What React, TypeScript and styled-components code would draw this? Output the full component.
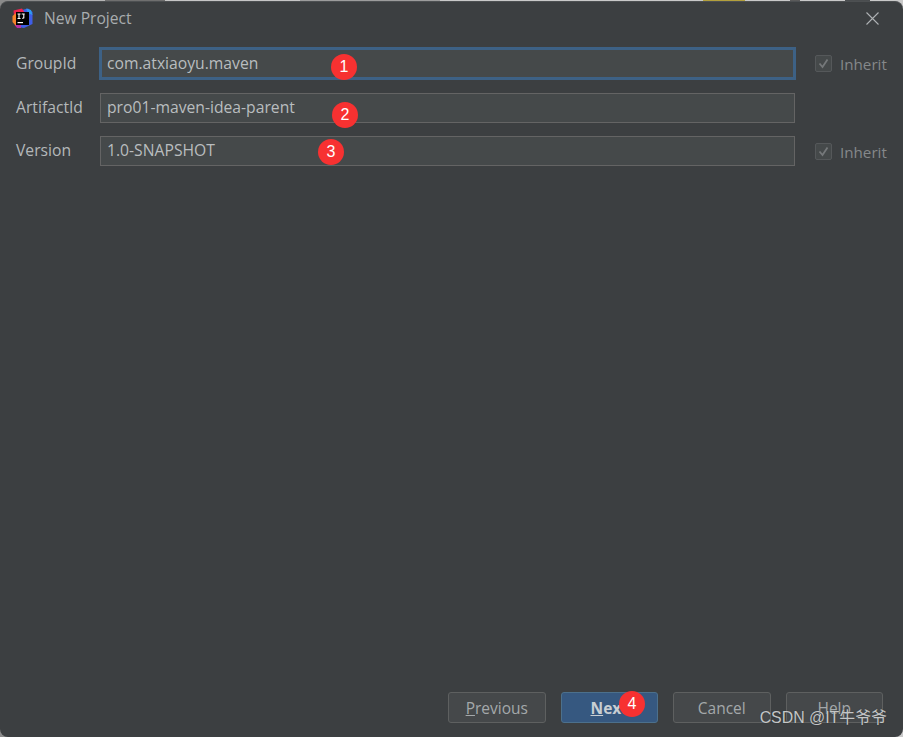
import React from 'react'
import styled, { createGlobalStyle } from 'styled-components'

const GlobalStyle = createGlobalStyle`
  html, body {
    margin: 0;
    padding: 0;
    background: #3c3f41;
  }
`

// what shows of the window behind the dialog, along the top edge
const Page = styled.div`
  width: 903px;
  height: 737px;
  padding-top: 1px;
  box-sizing: border-box;
  background: linear-gradient(
    to right,
    #8a8a8a 0 60px,
    #b5b5b5 60px 105px,
    #6f6f6f 105px 165px,
    #c6c6c6 165px 300px,
    #9c9c9c 300px 440px,
    #c9c9c9 440px 703px,
    #b3a03c 703px 745px,
    #c9c9c9 745px 790px,
    #5a5a5a 790px 800px,
    #c9c9c9 800px 845px,
    #4a4d4f 845px 870px,
    #c9c9c9 870px 903px
  );
`

const Dialog = styled.div`
  box-sizing: border-box;
  width: 903px;
  height: 736px;
  position: relative;
  display: flex;
  flex-direction: column;
  background: #3c3f41;
  border-top: 1px solid #4d5052;
  border-radius: 8px;
  font-family: 'Open Sans', 'Noto Sans', sans-serif;
  color: #b4b8ba;
  overflow: hidden;
`

const TitleBar = styled.div`
  height: 33px;
  display: flex;
  align-items: center;
  padding: 0 24px 0 12px;
  flex: none;
`

const Title = styled.span`
  margin-left: 11px;
  padding-bottom: 1px;
  font-size: 15.6px;
  flex: 1;
  color: #a9adaf;
`

const Form = styled.div`
  display: flex;
  flex-direction: column;
  gap: 13px;
  padding: 13px 0 0 16px;
  flex: 1;
`

const Row = styled.div<{ $pulled?: boolean }>`
  display: flex;
  align-items: center;
  height: 31px;
  margin-top: ${({ $pulled }) => ($pulled ? '-1px' : '0')};
`

const Label = styled.label`
  width: 84px;
  padding-bottom: 2px;
  font-size: 15.7px;
  color: #b4b8ba;
`

const Field = styled.div<{ $focused?: boolean }>`
  box-sizing: border-box;
  width: 695px;
  height: 30px;
  display: flex;
  align-items: center;
  padding: 0 0 2px 6px;
  font-size: 15.7px;
  color: #b9bdbf;
  background: #45494a;
  border: 1px solid #646464;
  ${({ $focused }) =>
    $focused &&
    `
    width: 697px;
    height: 33px;
    margin: 0 -1px;
    border: 3px solid #3d6185;
    padding-left: 5px;
  `}
`

const Inherit = styled.div<{ $low?: boolean }>`
  display: flex;
  align-items: center;
  gap: 8px;
  margin: ${({ $low }) => ($low ? '2px' : '0')} 0 0 20px;
  font-size: 15.2px;
  color: #85888a;
`

const CheckBox = styled.span`
  box-sizing: border-box;
  width: 17px;
  height: 17px;
  display: flex;
  align-items: center;
  justify-content: center;
  background: #45494a;
  border: 1px solid #55585a;
  border-radius: 2px;
`

const Footer = styled.div`
  display: flex;
  justify-content: flex-end;
  gap: 15px;
  padding: 0 20px 14px 0;
  flex: none;
`

const Button = styled.div<{ $primary?: boolean }>`
  box-sizing: border-box;
  width: 97.5px;
  height: 31px;
  padding-top: 1px;
  display: flex;
  align-items: center;
  justify-content: center;
  font-size: 15.5px;
  border-radius: 3px;
  color: ${({ $primary }) => ($primary ? '#c8ced3' : '#a4a8aa')};
  font-weight: ${({ $primary }) => ($primary ? 700 : 400)};
  background: ${({ $primary }) => ($primary ? '#365880' : '#45484a')};
  border: 1px solid ${({ $primary }) => ($primary ? '#4c708c' : '#5e6060')};
`

const Mnemonic = styled.span`
  text-decoration: underline;
`

const Badge = styled.span<{ $x: number; $y: number }>`
  position: absolute;
  left: ${({ $x }) => $x}px;
  top: ${({ $y }) => $y}px;
  width: 26px;
  height: 26px;
  border-radius: 50%;
  background: #f73131;
  color: #ffffff;
  display: flex;
  align-items: center;
  justify-content: center;
  font-family: 'Liberation Sans', sans-serif;
  font-size: 16px;
`

const Watermark = styled.span`
  position: absolute;
  right: 16px;
  bottom: 9px;
  font-family: 'Liberation Sans', 'Noto Sans CJK SC', sans-serif;
  font-size: 15.9px;
  color: #c4c6c7;
  text-shadow: 0 0 1px #2c2e30;
`

const CloseIcon = () => (
  <svg width="13" height="13" viewBox="0 0 13 13">
    <path d="M0.5 0.5 L12.5 12.5 M12.5 0.5 L0.5 12.5" stroke="#aeb1b3" strokeWidth="1.1" />
  </svg>
)

const CheckMark = () => (
  <svg width="13" height="13" viewBox="0 0 13 13" fill="none">
    <path d="M2.5 6.5 L5.5 10 L10.5 2.5" stroke="#75787a" strokeWidth="1.8" />
  </svg>
)

const Logo = () => (
  <svg width="21" height="21" viewBox="0 0 21 21">
    <path d="M10 2 L16 0.5 L20.5 4 L20.5 16 L12 20 L6 19 Z" fill="#3f5ee8" />
    <path d="M1.5 2.5 L10 0.5 L13 5 L8 20 L3 18 Z" fill="#ee2350" />
    <path d="M0.5 8 L4 5 L4 18 L0.5 14 Z" fill="#f6822a" />
    <path d="M3 17 L9 17 L9 20 L5 20 Z" fill="#b42fa8" />
    <path d="M14 0.5 L19 2 L20.5 7 L16 5 Z" fill="#2f9bf2" />
    <rect x="4" y="4" width="13" height="13" fill="#000000" />
    <path d="M5.5 6 H8.5 M7 6 V10.5 M5.5 10.5 H8.5 M9.7 6 H12.7 M11.8 6 V9.8 L10.3 10.5" stroke="#ffffff" strokeWidth="1.1" fill="none" />
    <rect x="5.5" y="14" width="5.5" height="1.2" fill="#ffffff" />
  </svg>
)

const App: React.FC = () => (
  <>
    <GlobalStyle />
    <Page>
      <Dialog>
        <TitleBar>
          <Logo />
          <Title>New Project</Title>
          <CloseIcon />
        </TitleBar>
        <Form>
          <Row>
            <Label>GroupId</Label>
            <Field $focused>com.atxiaoyu.maven</Field>
            <Inherit>
              <CheckBox>
                <CheckMark />
              </CheckBox>
              Inherit
            </Inherit>
          </Row>
          <Row>
            <Label>ArtifactId</Label>
            <Field>pro01-maven-idea-parent</Field>
          </Row>
          <Row $pulled>
            <Label>Version</Label>
            <Field>1.0-SNAPSHOT</Field>
            <Inherit $low>
              <CheckBox>
                <CheckMark />
              </CheckBox>
              Inherit
            </Inherit>
          </Row>
        </Form>
        <Footer>
          <Button>
            <span>
              <Mnemonic>P</Mnemonic>revious
            </span>
          </Button>
          <Button $primary>
            <span>
              <Mnemonic>N</Mnemonic>ext
            </span>
          </Button>
          <Button>Cancel</Button>
          <Button>Help</Button>
        </Footer>
        <Badge $x={331} $y={52}>1</Badge>
        <Badge $x={332} $y={100}>2</Badge>
        <Badge $x={318} $y={137}>3</Badge>
        <Badge $x={619} $y={689}>4</Badge>
        <Watermark>CSDN @IT牛爷爷</Watermark>
      </Dialog>
    </Page>
  </>
)

export default App
